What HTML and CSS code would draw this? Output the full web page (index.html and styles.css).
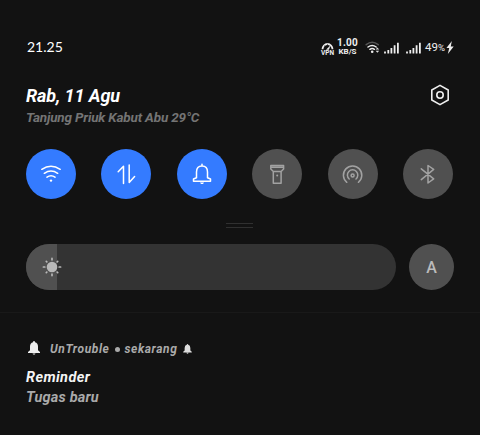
FILE: index.html
```html
<!DOCTYPE html>
<html lang="id">
<head>
<meta charset="utf-8">
<title>Panel</title>
<link rel="stylesheet" href="styles.css">
</head>
<body>
<main class="panel">
  <div class="status">
    <span class="clock">21.25</span>
    <div class="indicators">
      <div class="vpn">
        <svg width="13" height="8" viewBox="0 0 13 8"><path d="M1.5 7.2A5 5.2 0 1 1 11.5 7.2" fill="none" stroke="#eee" stroke-width="1.8"/><path d="M3 3.6l1 .8M6.5 1.8v1" stroke="#111" stroke-width=".6"/><path d="M5 7.8L9.6 3.2 7.9 7.8z" fill="#eee"/></svg>
        <span>VPN</span>
      </div>
      <div class="speed"><span class="rate">1.00</span><span class="unit">KB/S</span></div>
      <svg class="net" width="16" height="13" viewBox="0 0 16 13"><g fill="none" stroke-linecap="round"><path d="M1.2 3.7Q7.2-1.2 13.2 3.7" stroke="#555" stroke-width="1.5"/><path d="M3 6Q7.2 2.8 11.2 6M4.9 8.3Q7.2 6.7 9.4 8.3" stroke="#eee" stroke-width="1.5"/></g><circle cx="7.2" cy="10.7" r="1.3" fill="#eee"/><path d="M10.6 8.6L12.4 6.6l1.8 2zM10.6 9.8l1.8 2 1.8-2z" fill="#ddd"/></svg>
      <svg class="bars one" width="15" height="12" viewBox="0 0 15 12"><path d="M1 11.5V9.5M4.3 11.5V8M7.4 11.5V6M10.6 11.5V3.3M13.9 11.5V.8" stroke="#eee" stroke-width="1.8"/></svg>
      <svg class="bars two" width="15" height="12" viewBox="0 0 15 12"><path d="M1 11.5V9.5M4.3 11.5V8M7.4 11.5V6M10.6 11.5V3.3M13.9 11.5V.8" stroke="#eee" stroke-width="1.8"/></svg>
      <span class="battery">49<small>%</small></span>
      <svg class="bolt" width="8" height="13" viewBox="0 0 7 12"><path d="M5.2 0L.2 6.5h2.6L1.5 12 6.9 5H4.2z" fill="#eee"/></svg>
    </div>
  </div>

  <header class="heading">
    <div>
      <h1 class="date">Rab, 11 Agu</h1>
      <p class="weather">Tanjung Priuk Kabut Abu 29°C</p>
    </div>
    <svg class="settings" width="20" height="22" viewBox="0 0 20 22" fill="none" stroke="#eee" stroke-width="1.6" stroke-linejoin="round"><path d="M10 1.4L18.2 6v10L10 20.6 1.8 16V6z"/><circle cx="10" cy="11" r="3.2"/></svg>
  </header>

  <div class="toggles">
    <div class="toggle on"><svg viewBox="0 0 50 50"><path d="M15.8 20.3Q25 14.2 34.2 20.3M18.3 24.3Q25 19.7 31.7 24.3M21 28.2Q25 25.4 29 28.2"/><circle class="solid" cx="25" cy="31.6" r="1.2"/></svg></div>
    <div class="toggle on"><svg viewBox="0 0 50 50"><path d="M17.2 22.7L22.5 17.2V34.5M28.2 16V33.5L33.6 27.5"/></svg></div>
    <div class="toggle on"><svg viewBox="0 0 50 50"><path d="M19.5 28.8V23C19.5 19.2 21.7 17 25 17s5.5 2.2 5.5 6v5.8L33.5 30v2.3H16.5V30zM25 15.3V17"/><path class="solid" d="M23 33.5h4l-1 1.5h-2z"/></svg></div>
    <div class="toggle"><svg viewBox="0 0 50 50"><path d="M18.8 16.5h12.8v3.5l-2.5 2.5h-7.8L18.8 20zM18.8 18.3h12.8M21.3 22.5v11.8h7.8V22.5"/><circle class="solid" cx="25.2" cy="26.5" r="1"/></svg></div>
    <div class="toggle"><svg viewBox="0 0 50 50"><path d="M18.8 33.3A9.2 9.2 0 1 1 30.4 33.3M21.2 30A5.2 5.2 0 1 1 28 30"/><circle cx="24.6" cy="26.4" r="1.5"/></svg></div>
    <div class="toggle"><svg viewBox="0 0 50 50"><path d="M18.3 19.8L30.7 29.9 25 34V16.5L30.7 20.3 18.3 30.6"/></svg></div>
  </div>

  <div class="handle"></div>

  <div class="brightness">
    <div class="slider">
      <div class="level"></div>
      <svg class="sun" width="20" height="20" viewBox="0 0 20 20"><circle cx="10" cy="10" r="5.3" fill="#b8b8b8"/><path d="M10 1.4v1.4M10 17.2v1.4M1.4 10h1.4M17.2 10h1.4M4.3 4.3l.5.5M15.2 15.2l.5.5M15.7 4.3l-.5.5M4.8 15.2l-.5.5" stroke="#b8b8b8" stroke-width="1.7" stroke-linecap="round"/></svg>
    </div>
    <div class="auto">A</div>
  </div>

  <section class="notice">
    <div class="source">
      <svg class="bell" width="12" height="14" viewBox="0 0 12 14"><path d="M6 0Q7 0 7 1.2Q10 2 10 5.5V9.2L12 11v.9H0V11L2 9.2V5.5Q2 2 5 1.2Q5 0 6 0zM4.5 12.4h3Q7 13.6 6 13.6T4.5 12.4z" fill="#eee"/></svg>
      <span class="app">UnTrouble</span><i class="dot"></i><span class="when">sekarang</span>
      <svg class="minibell" width="9" height="10" viewBox="0 0 12 14"><path d="M6 0Q7 0 7 1.2Q10 2 10 5.5V9.2L12 11v.9H0V11L2 9.2V5.5Q2 2 5 1.2Q5 0 6 0zM4.5 12.4h3Q7 13.6 6 13.6T4.5 12.4z" fill="#ddd"/></svg>
    </div>
    <h2 class="title">Reminder</h2>
    <p class="body">Tugas baru</p>
  </section>
</main>
</body>
</html>
```
FILE: styles.css
```css
* { box-sizing: border-box; margin: 0; padding: 0; }
body { width: 480px; height: 435px; overflow: hidden; background: #121212; color: #eee; font-family: Roboto, "Liberation Sans", sans-serif; white-space: nowrap; }
svg { display: block; flex: none; }
.panel { height: 435px; display: flex; flex-direction: column; padding-top: 38px; }
.status { height: 20px; display: flex; justify-content: space-between; align-items: center; padding: 0 26px 0 27px; }
.clock { font: 14px/18px Lato, sans-serif; color: #fff; margin-top: -2px; }
.indicators { display: flex; align-items: center; height: 20px; margin-top: -1px; }
.vpn { width: 13px; margin-right: 3px; padding-top: 2px; }
.vpn span { display: block; font-size: 6.5px; line-height: 6px; font-weight: 700; text-align: center; }
.speed { width: 21px; margin-right: 7px; font-weight: 700; text-align: center; }
.speed span { display: block; }
.rate { font-size: 10px; line-height: 8px; letter-spacing: .2px; }
.unit { font-size: 8px; line-height: 9px; }
.net { margin-right: 3px; }
.one { margin-right: 7px; }
.two { margin-right: 4px; }
.battery { width: 21px; font-size: 11.5px; line-height: 14px; }
.battery small { font-size: 9.5px; }

.heading { display: flex; justify-content: space-between; align-items: flex-start; padding: 26px 30px 0 26px; height: 92px; }
.date { font-size: 18px; line-height: 24px; font-weight: 700; font-style: italic; letter-spacing: -.1px; color: #fff; }
.weather { font-size: 13.5px; line-height: 20px; margin-top: -1px; font-weight: 700; font-style: italic; letter-spacing: -.17px; color: #747474; }

.toggles { display: flex; justify-content: space-between; padding: 0 27px 0 26px; height: 50px; margin-top: -1px; }
.toggle { width: 50px; height: 50px; border-radius: 50%; background: #505050; color: #a2a2a2; }
.toggle.on { background: #347bff; color: #fff; }
.toggle path, .toggle circle { fill: none; stroke: currentColor; stroke-width: 1.5; stroke-linecap: round; stroke-linejoin: round; }
.toggle .solid { fill: currentColor; stroke: none; }

.handle { width: 27px; height: 5px; margin: 24px 0 0 226px; border: solid #303030; border-width: 1px 0; }
.brightness { display: flex; gap: 13px; margin: 16px 26px 0; height: 46px; }
.slider { width: 370px; height: 46px; border-radius: 23px; background: #333; overflow: hidden; position: relative; }
.level { width: 31px; height: 46px; background: #505050; }
.sun { position: absolute; left: 16px; top: 13px; }
.auto { width: 45px; height: 46px; border-radius: 50%; background: #505050; color: #bbb; font-size: 16px; line-height: 47px; font-weight: 500; text-align: center; }

.notice { margin-top: 22px; border-top: 1px solid #191919; padding: 27px 26px 0; font-style: italic; font-weight: 700; }
.source { display: flex; align-items: center; height: 18px; padding-left: 2px; font-size: 12px; letter-spacing: .6px; color: #aaa; }
.bell { margin-top: -2px; }
.app { margin-left: 10px; }
.dot { width: 5px; height: 5px; border-radius: 50%; background: #aaa; margin: 0 5px; }
.when { letter-spacing: .6px; }
.minibell { margin-left: 6px; }
.title { font-size: 14.5px; line-height: 20px; margin-top: 10px; letter-spacing: .4px; color: #f4f4f4; }
.body { font-size: 14.5px; line-height: 20px; letter-spacing: .2px; color: #aaa; }
```
